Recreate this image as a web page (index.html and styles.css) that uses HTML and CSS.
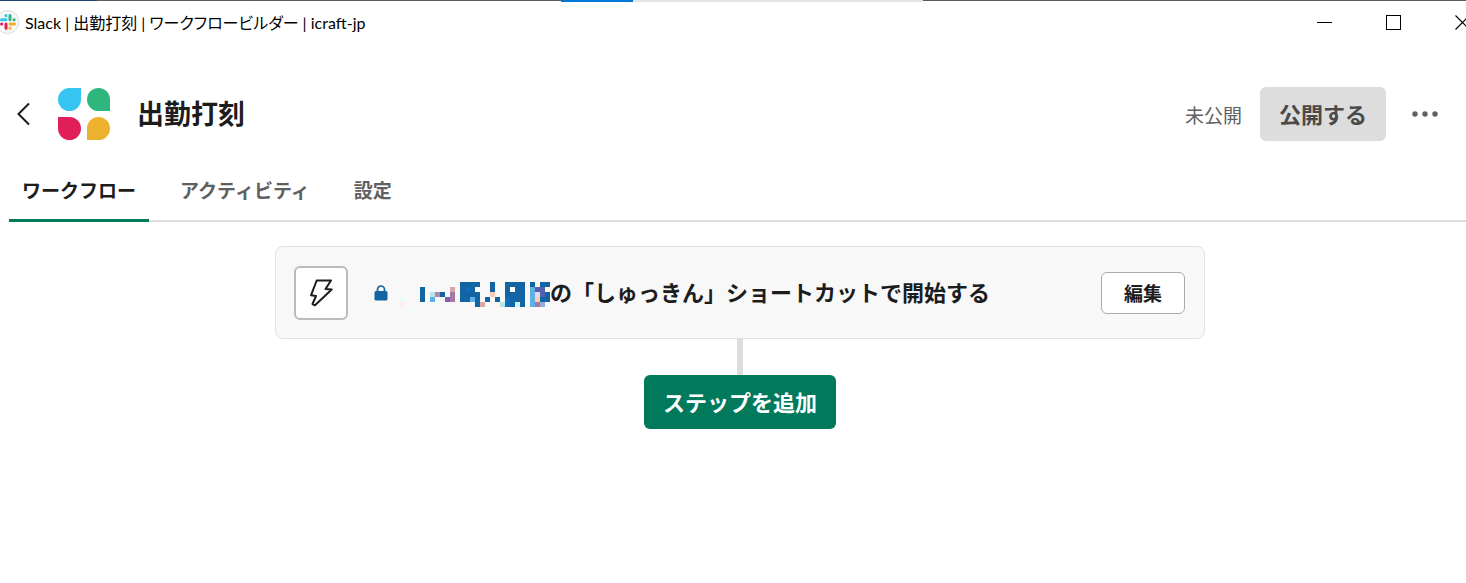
FILE: index.html
```html
<!DOCTYPE html>
<html lang="ja">
<head>
    <meta charset="UTF-8">
    <meta name="viewport" content="width=device-width, initial-scale=1.0">
    <title>Slack | 出勤打刻 | ワークフロービルダー | icraft-jp</title>
    <link rel="stylesheet" href="styles.css">
</head>
<body>
    <div class="window-edge">
        <span class="edge-navy"></span>
        <span class="edge-dark"></span>
        <span class="edge-blue"></span>
        <span class="edge-light"></span>
        <span class="edge-rest"></span>
    </div>

    <div class="titlebar">
        <svg class="app-icon" width="20" height="24" viewBox="0 0 20 24" aria-hidden="true">
            <circle cx="7.500" cy="12" r="11.500" fill="#f7f7f7" stroke="#dcdcdc"/>
            <g fill="none" stroke-width="3" stroke-linecap="round">
                <path d="M1.500 9.800h4.500M6 5.500v.2" stroke="#36c5f0"/>
                <path d="M10 5.500v4.300M14 9.800h.2" stroke="#2eb67d"/>
                <path d="M10 14h4.500M10 18v.2" stroke="#ecb22e"/>
                <path d="M6 14v4.200M1.500 14h.2" stroke="#e01e5a"/>
            </g>
        </svg>
        <span class="titlebar-text">Slack | 出勤打刻 | ワークフロービルダー | icraft-jp</span>
        <div class="window-controls">
            <button type="button" aria-label="最小化">
                <svg width="15" height="15" viewBox="0 0 15 15" shape-rendering="crispEdges"><path d="M0 7h15v1H0z"/></svg>
            </button>
            <button type="button" aria-label="最大化">
                <svg width="15" height="15" viewBox="0 0 15 15" shape-rendering="crispEdges"><path d="M.5.5h14v14H.5z" fill="none" stroke="#000"/></svg>
            </button>
            <button type="button" aria-label="閉じる">
                <svg width="15" height="15" viewBox="0 0 15 15"><path d="M.5.5l14 14M14.500.5l-14 14" fill="none" stroke="#000" stroke-width="1.200"/></svg>
            </button>
        </div>
    </div>

    <header class="header">
        <button type="button" class="back-button" aria-label="戻る">
            <svg width="16" height="24" viewBox="0 0 16 24"><path d="M14 1.500L3.500 12 14 22.500" fill="none" stroke="#1d1c1d" stroke-width="2"/></svg>
        </button>
        <svg class="workflow-logo" width="54" height="54" viewBox="0 0 54 54" aria-hidden="true">
            <path d="M12.500 1H24v11.500A11.500 11.500 0 1 1 12.500 1z" fill="#36c5f0"/>
            <path d="M41.500 1A11.500 11.500 0 0 1 53 12.500V24H41.500a11.500 11.500 0 0 1 0-23z" fill="#2eb67d"/>
            <path d="M1 30h11.500A11.500 11.500 0 1 1 1 41.500z" fill="#e01e5a"/>
            <path d="M41.500 30a11.500 11.500 0 0 1 0 23H30V41.500A11.500 11.500 0 0 1 41.500 30z" fill="#ecb22e"/>
        </svg>
        <h1>出勤打刻</h1>
        <div class="header-actions">
            <span class="status">未公開</span>
            <button type="button" class="publish-button">公開する</button>
            <button type="button" class="more-button" aria-label="その他">
                <svg width="26" height="6" viewBox="0 0 26 6" fill="#616061"><circle cx="3" cy="3" r="2.700"/><circle cx="13" cy="3" r="2.700"/><circle cx="23" cy="3" r="2.700"/></svg>
            </button>
        </div>
    </header>

    <nav class="tabs">
        <a href="#workflow" class="tab active">ワークフロー</a>
        <a href="#activity" class="tab">アクティビティ</a>
        <a href="#settings" class="tab">設定</a>
    </nav>

    <main class="builder">
        <section class="step-card">
            <div class="step-icon">
                <svg width="24" height="28" viewBox="0 0 24 28"><path d="M7.700 1.500H22l-5.500 8.500 6.200.5L6 26.300 3.500 25 7 17l-5-.7z" fill="none" stroke="#1d1c1d" stroke-width="2" stroke-linejoin="round"/></svg>
            </div>
            <svg class="lock" width="14" height="16" viewBox="0 0 14 16" aria-hidden="true">
                <path d="M3.500 7V4.500a3.500 3.500 0 0 1 7 0V7" fill="none" stroke="#1264a3" stroke-width="1.700"/>
                <rect x=".5" y="6" width="13" height="9.500" rx="1.500" fill="#1264a3"/>
            </svg>
            <h2 class="step-title">
                <!-- masked channel name, one unit per block -->
                <svg class="masked-name" width="150" height="25" viewBox="-4 0 30 5" shape-rendering="crispEdges" role="img" aria-label="非公開チャンネル">
                    <path fill="#1264a3" d="M0 1h1v3H0zM4 2h1v1H4zM8 0h4v1H8zM8 1h3v1H8zM8 2h4v1H8zM8 3h2v1H8zM11 3h1v2h-1zM14 0h1v2h-1zM13 3h1v1h-1zM15 3h1v1h-1zM17 0h4v1h-4zM17 1h1v4h-1zM19 1h2v1h-2zM18 2h3v2h-3zM18 4h1v1h-1zM20 4h1v1h-1zM22 0h1v1h-1zM24 0h2v1h-2zM25 2h1v2h-1zM24 3h1v1h-1z"/>
                    <path fill="#0f6dbb" d="M9 1h1v1H9zM17 3h1v2h-1z"/>
                    <path fill="#5eb0e5" d="M2 3h1v1H2zM10 3h1v1h-1zM22 1h1v4h-1z"/>
                    <path fill="#b5e5f0" d="M2 2h1v1H2zM16 4h1v1h-1z"/>
                    <path fill="#c8f7f7" d="M19 4h1v1h-1z"/>
                    <path fill="#b58aa0" d="M3 2h1v1H3z"/>
                    <path fill="#8060a8" d="M5 3h1v1H5z"/>
                    <path fill="#d9a5a8" d="M6 1h1v1H6zM12 4h1v1h-1z"/>
                    <path fill="#a878a4" d="M6 2h1v2H6zM23 4h1v1h-1z"/>
                    <path fill="#fbcdb8" d="M14 2h1v1h-1zM23 3h1v1h-1z"/>
                    <path fill="#fdf6e3" d="M1 2h1v1H1zM23 0h1v1h-1zM25 1h1v1h-1zM15 4h1v1h-1z"/>
                    <path fill="#fff" d="M11 1h1v1h-1zM18 1h1v1h-1z"/>
                    <path fill="#5260ae" d="M23 1h2v1h-2zM24 2h1v1h-1z"/>
                    <path fill="#e0d8ec" d="M23 2h1v1h-1z"/>
                    <path fill="#90aed4" d="M24 4h1v1h-1z"/>
                    <path fill="#eefafa" d="M-4 3h1v1h-1z"/>
                    <path fill="#fbf1ea" d="M-4 4h1v1h-1z"/>
                </svg><span>の「しゅっきん」ショートカットで開始する</span>
            </h2>
            <button type="button" class="edit-button">編集</button>
        </section>
        <div class="connector"></div>
        <button type="button" class="add-step-button">ステップを追加</button>
    </main>
</body>
</html>
```
FILE: styles.css
```css
* {
    margin: 0;
    padding: 0;
    box-sizing: border-box;
}

body {
    font-family: Lato, 'Noto Sans CJK JP', sans-serif;
    color: #1d1c1d;
    background: #fff;
    overflow-x: hidden;
}

button {
    font-family: inherit;
    font-weight: bold;
    border: none;
    background: none;
    cursor: pointer;
}

svg {
    display: block;
    flex-shrink: 0;
}

.window-edge {
    display: flex;
    height: 2px;
}

.edge-navy {
    width: 97px;
    height: 1px;
    background: #1d4370;
}

.edge-dark {
    width: 464px;
    height: 1px;
    background: #5c5c5c;
}

.edge-blue {
    width: 72px;
    background: #0078d7;
}

.edge-light {
    width: 290px;
    background: #e5e5e5;
}

.edge-rest {
    flex: 1;
    height: 1px;
    background: #5c5c5c;
}

.titlebar {
    display: flex;
    align-items: center;
    height: 40px;
}

.titlebar-text {
    margin-left: 5px;
    font-family: Lato, 'Noto Sans CJK JP', sans-serif;
    font-size: 16px;
    font-feature-settings: 'palt';
    color: #000;
    white-space: nowrap;
}

.window-controls {
    display: flex;
    gap: 54px;
    margin-left: auto;
    margin-right: -4px;
}

.header {
    display: flex;
    align-items: center;
    padding: 45px 28px 20px 15px;
}

.workflow-logo {
    margin-left: 26px;
}

.header h1 {
    margin-left: 26px;
    font-size: 27px;
    line-height: 40px;
}

.header-actions {
    display: flex;
    align-items: center;
    margin-left: auto;
}

.status {
    margin-right: 18px;
    font-size: 19px;
    color: #616061;
}

.publish-button {
    height: 54px;
    padding: 0 19px 2px;
    border-radius: 6px;
    font-size: 22px;
    color: #4a4a4a;
    background: #ddd;
}

.more-button {
    margin-left: 26px;
}

.tabs {
    display: flex;
    gap: 18px;
    margin-left: 9px;
    box-shadow: inset 0 -2px #ddd;
}

.tab {
    padding: 16px 13px 14px;
    border-bottom: 3px solid transparent;
    font-size: 19px;
    line-height: 28px;
    font-weight: bold;
    color: #616061;
    text-decoration: none;
}

.tab.active {
    color: #1d1c1d;
    border-bottom-color: #007a5a;
}

.builder {
    display: flex;
    flex-direction: column;
    align-items: center;
    padding: 24px 0 24px 14px;
}

.step-card {
    display: flex;
    align-items: center;
    width: 100%;
    max-width: 930px;
    padding: 19px 19px 18px 18px;
    border: 1px solid #e1e1e1;
    border-radius: 8px;
    background: #f8f8f8;
}

.step-icon {
    display: flex;
    align-items: center;
    justify-content: center;
    width: 54px;
    height: 54px;
    border: 2px solid #bbb;
    border-radius: 6px;
    background: #fff;
}

.lock {
    margin-left: 26px;
}

.step-title {
    display: flex;
    align-items: center;
    margin-left: 12px;
    font-size: 22px;
    line-height: 32px;
    white-space: nowrap;
}

.masked-name {
    margin-top: 2px;
}

.edit-button {
    height: 42px;
    margin-left: auto;
    padding: 0 22px 2px;
    border: 1px solid #aaa;
    border-radius: 6px;
    font-size: 19px;
    color: #1d1c1d;
    background: #fff;
}

.connector {
    width: 6px;
    height: 36px;
    background: #ddd;
}

.add-step-button {
    height: 54px;
    padding: 0 19px 2px;
    border-radius: 6px;
    font-size: 22px;
    color: #fff;
    background: #007a5a;
}
```
